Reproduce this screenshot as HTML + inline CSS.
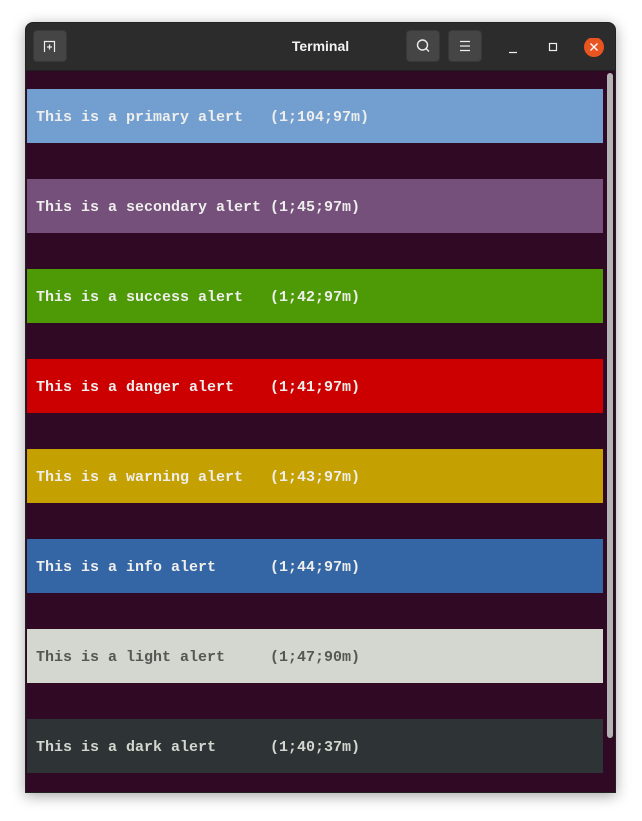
<!DOCTYPE html>
<html><head><meta charset="utf-8"><style>
body{margin:0;width:642px;height:821px;background:#fff;position:relative;overflow:hidden;font-family:"Liberation Sans",sans-serif}
.win{position:absolute;left:25px;top:22px;width:591px;height:771px;background:#300a24;border-radius:8px 8px 0 0;box-shadow:0 3px 14px rgba(0,0,0,.35);overflow:hidden;border:1px solid #222;box-sizing:border-box}
.tb{position:absolute;left:0;top:0;width:100%;height:47px;background:#2c2c2c;border-bottom:1px solid #1e1e1e}
.btn{position:absolute;top:7px;width:34px;height:32px;background:#454545;border-radius:4px;box-sizing:border-box;border:1px solid #383838}
.title{position:absolute;left:0;width:100%;top:15px;text-align:center;color:#f2f2f2;font-weight:bold;font-size:14px}
.bar{position:absolute;left:1px;width:576px;height:54px;font-family:"Liberation Mono",monospace;font-weight:bold;font-size:15px;line-height:58px;padding-left:9px;box-sizing:border-box;white-space:pre;color:#eeeeec}
.sb{position:absolute;left:581px;top:50px;width:6px;height:665px;background:#b4b4b4;border-radius:3px}
</style></head><body>
<div class="win">
<div class="tb">
<div class="btn" style="left:7px"><svg width="32" height="30" viewBox="0 0 32 30"><path d="M10.5 21V10.5H20.5V21M15.5 13.5v5M13 16h5" stroke="#eee" stroke-width="1.2" fill="none"/></svg></div>
<div class="title">Terminal</div>
<div class="btn" style="left:380px"><svg width="32" height="30" viewBox="0 0 32 30"><circle cx="15.5" cy="14" r="5" stroke="#eee" stroke-width="1.4" fill="none"/><path d="M19 17.5l3 3" stroke="#eee" stroke-width="1.4"/></svg></div>
<div class="btn" style="left:422px"><svg width="32" height="30" viewBox="0 0 32 30"><path d="M11 10.5h10M11 15h10M11 19.5h10" stroke="#eee" stroke-width="1.2"/></svg></div>
<svg style="position:absolute;left:476px;top:15px" width="110" height="20"><path d="M7 14.5h8" stroke="#eee" stroke-width="1.2"/><rect x="47.5" y="5.5" width="7" height="7" stroke="#eee" stroke-width="1.2" fill="none"/><circle cx="92" cy="9" r="10" fill="#e95420"/><path d="M88.5 5.5l7 7M95.5 5.5l-7 7" stroke="#fff" stroke-width="1.4"/></svg>
</div>
<div class="bar" style="top:66px;background:#729fcf">This is a primary alert   (1;104;97m)</div>
<div class="bar" style="top:156px;background:#75507b">This is a secondary alert (1;45;97m)</div>
<div class="bar" style="top:246px;background:#4e9a06">This is a success alert   (1;42;97m)</div>
<div class="bar" style="top:336px;background:#cc0000">This is a danger alert    (1;41;97m)</div>
<div class="bar" style="top:426px;background:#c4a000">This is a warning alert   (1;43;97m)</div>
<div class="bar" style="top:516px;background:#3465a4">This is a info alert      (1;44;97m)</div>
<div class="bar" style="top:606px;background:#d3d7cf;color:#555753">This is a light alert     (1;47;90m)</div>
<div class="bar" style="top:696px;background:#2e3436;color:#d3d7cf">This is a dark alert      (1;40;37m)</div>
<div class="sb"></div>
</div>
</body></html>
